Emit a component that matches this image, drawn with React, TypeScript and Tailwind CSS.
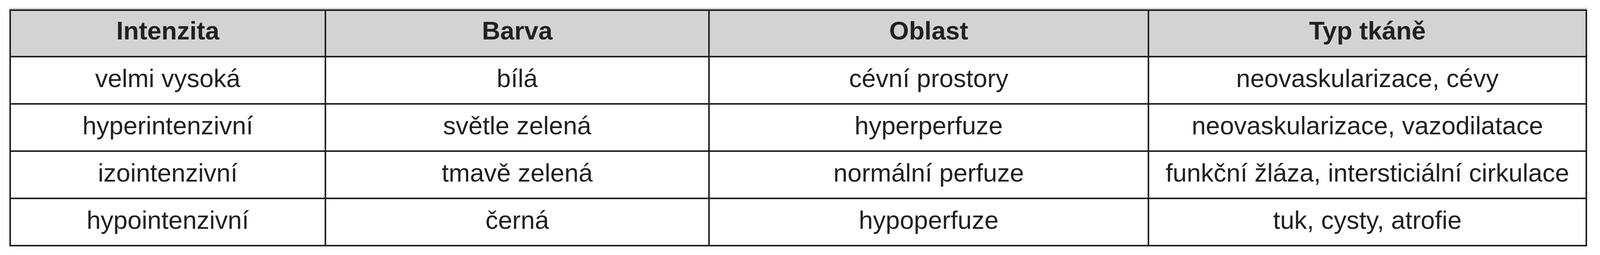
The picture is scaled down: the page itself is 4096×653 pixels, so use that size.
import React from "react";

const header = ["Intenzita", "Barva", "Oblast", "Typ tkáně"];
const rows = [
  ["velmi vysoká", "bílá", "cévní prostory", "neovaskularizace, cévy"],
  ["hyperintenzivní", "světle zelená", "hyperperfuze", "neovaskularizace, vazodilatace"],
  ["izointenzivní", "tmavě zelená", "normální perfuze", "funkční žláza, intersticiální cirkulace"],
  ["hypointenzivní", "černá", "hypoperfuze", "tuk, cysty, atrofie"],
];

export default function App() {
  return (
    <div className="w-[4096px] h-[653px] bg-white pl-[24px] pt-[20px] font-['Liberation_Sans',Arial,sans-serif] text-[#231f20]">
      <div className="w-[4039px] border-t-[4px] border-[#d1d3d4] bg-[#231f20] p-[4px] grid grid-cols-[803px_978px_1121px_1117px] grid-rows-[115px_117px_117px_117px_117px] gap-[4px]">
        {header.map((h) => (
          <div
            key={h}
            className="bg-[#d1d3d4] flex items-center justify-center pb-[14px] text-[65px] font-bold leading-normal whitespace-nowrap"
          >
            {h}
          </div>
        ))}
        {rows.map((r, i) =>
          r.map((c, j) => (
            <div
              key={`${i}-${j}`}
              className="bg-white flex items-center justify-center pb-[10px] text-[65px] leading-normal whitespace-nowrap"
            >
              {c}
            </div>
          ))
        )}
      </div>
    </div>
  );
}
